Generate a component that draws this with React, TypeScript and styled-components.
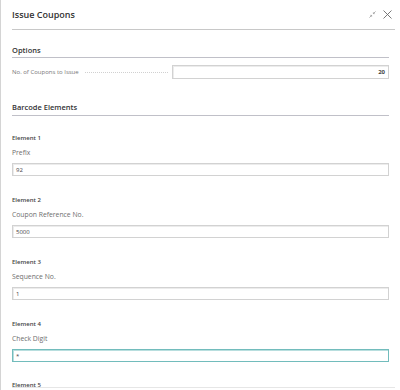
import React from "react";
import styled, { createGlobalStyle } from "styled-components";

const Global = createGlobalStyle`
  html, body { margin: 0; padding: 0; background: #fff; }
  body { font-family: "Open Sans", "Noto Sans", sans-serif; color: #333; }
`;

const Frame = styled.div`
  width: 400px;
  height: 390px;
  box-sizing: border-box;
  border-left: 1px solid #d4d4d4;
  overflow: hidden;
  position: relative;
`;

const Header = styled.div`
  display: flex;
  align-items: center;
  justify-content: space-between;
  height: 29px;
  margin: 0 5px 0 11px;
  border-bottom: 1px solid #c8c8c8;
`;

const Title = styled.div`
  font-size: 9px;
  font-weight: 600;
  color: #333;
`;

const Icons = styled.div`
  display: flex;
  align-items: center;
  gap: 7px;
  padding-right: 3px;
`;

const Content = styled.div`
  padding: 0 11px 0 11px;
`;

const SectionHead = styled.div<{ $top: number; $pb: number }>`
  margin-top: ${(p) => p.$top}px;
  padding-bottom: ${(p) => p.$pb}px;
  border-bottom: 1px solid #c0c0c8;
  font-size: 7.5px;
  font-weight: 600;
  color: #333;
  line-height: 12px;
`;

const FieldRow = styled.div`
  display: flex;
  align-items: center;
  margin-top: 7px;
  height: 14px;
`;

const RowLabel = styled.div`
  font-size: 6px;
  color: #777;
  white-space: nowrap;
`;

const Leader = styled.div`
  flex: 1;
  margin: 1px 4px 0 6px;
  border-bottom: 1px dotted #d0d0d0;
`;

const Input = styled.div<{ $focus?: boolean; $right?: boolean; $bold?: boolean; $w?: string; $h?: number }>`
  box-sizing: border-box;
  width: ${(p) => p.$w || "100%"};
  height: ${(p) => p.$h || 13}px;
  border: 1px solid ${(p) => (p.$focus ? "#72bcbc" : "#d2d2d2")};
  box-shadow: ${(p) => (p.$focus ? "inset 1px 1px 0 #b8dede" : "inset 1px 1px 0 #ececec")};
  display: flex;
  align-items: center;
  justify-content: ${(p) => (p.$right ? "flex-end" : "flex-start")};
  padding: 0 3px;
  font-size: 6px;
  line-height: 8px;
  font-weight: ${(p) => (p.$bold ? 700 : 400)};
  color: #444;
`;

const Element = styled.div<{ $top: number }>`
  margin-top: ${(p) => p.$top}px;
`;

const ElementTitle = styled.div`
  font-size: 6px;
  font-weight: 600;
  color: #444;
  line-height: 8px;
  height: 8px;
`;

const ElementLabel = styled.div`
  font-size: 6.8px;
  color: #6e6e6e;
  line-height: 8px;
  height: 8px;
  margin-top: 7px;
  margin-bottom: 6px;
`;

const FooterLine = styled.div`
  position: absolute;
  left: 11px;
  right: 5px;
  bottom: 2px;
  border-top: 1px solid #e6e6e6;
`;

const elements = [
  { title: "Element 1", label: "Prefix", value: "92" },
  { title: "Element 2", label: "Coupon Reference No.", value: "5000" },
  { title: "Element 3", label: "Sequence No.", value: "1" },
  { title: "Element 4", label: "Check Digit", value: "*", focus: true },
];

export default function App() {
  return (
    <>
      <Global />
      <Frame>
        <Header>
          <Title>Issue Coupons</Title>
          <Icons>
            <svg width="7" height="7" viewBox="0 0 8 8" fill="none" stroke="#9a9a9a" strokeWidth="0.9">
              <path d="M0.5 7.5 L3 5" />
              <path d="M1.5 5 H3 V6.5" />
              <path d="M7.5 0.5 L5 3" />
              <path d="M5 1.5 V3 H6.5" />
            </svg>
            <svg width="9" height="9" viewBox="0 0 9 9" fill="none" stroke="#6a6a6a" strokeWidth="0.9">
              <path d="M0.5 0.5 L8.5 8.5 M8.5 0.5 L0.5 8.5" />
            </svg>
          </Icons>
        </Header>
        <Content>
          <SectionHead $top={14} $pb={1}>Options</SectionHead>
          <FieldRow>
            <RowLabel>No. of Coupons to Issue</RowLabel>
            <Leader />
            <Input $right $bold $w="217px" $h={14}>20</Input>
          </FieldRow>
          <SectionHead $top={22} $pb={2}>Barcode Elements</SectionHead>
          {elements.map((e, i) => (
            <Element key={e.title} $top={i === 0 ? 18 : 20}>
              <ElementTitle>{e.title}</ElementTitle>
              <ElementLabel>{e.label}</ElementLabel>
              <Input $focus={e.focus}>{e.value}</Input>
            </Element>
          ))}
          <Element $top={19}>
            <ElementTitle>Element 5</ElementTitle>
          </Element>
        </Content>
        <FooterLine />
      </Frame>
    </>
  );
}
